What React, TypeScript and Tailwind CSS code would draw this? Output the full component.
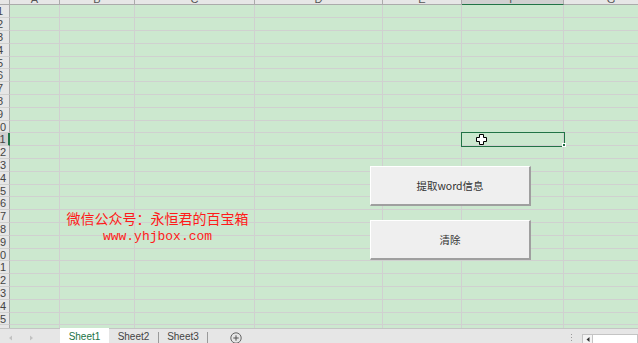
import React from 'react';

const cols = [
  { l: 'A', w: 'w-[50px]' },
  { l: 'B', w: 'w-[75px]' },
  { l: 'C', w: 'w-[120px]' },
  { l: 'D', w: 'w-[128px]' },
  { l: 'E', w: 'w-[79px]' },
  { l: 'F', w: 'w-[102px]' },
];

const rows = Array.from({ length: 25 }, (_, i) => i + 1);

function SheetButton({ top, label }: { top: string; label: string }) {
  return (
    <div className={`absolute left-[370px] ${top} w-[161px] h-[40px] bg-[#efefef] border-t border-l border-white border-r-2 border-b-2 border-r-[#9f9f9f] border-b-[#9f9f9f] flex items-center justify-center`}>
      <span className="text-[10.5px] text-[#333] font-['Noto_Sans_CJK_SC',sans-serif]">{label}</span>
    </div>
  );
}

export default function App() {
  return (
    <div className="relative w-[638px] h-[343px] overflow-hidden bg-[#cce8cf] flex flex-col font-['Liberation_Sans',sans-serif]">
      {/* column headers */}
      <div className="flex h-[5px] flex-shrink-0">
        <div className="w-[10px] bg-[#e6e6e6] border-r border-b border-[#ababab]" />
        {cols.map(c => (
          <div key={c.l} className={`${c.w} overflow-hidden flex justify-center border-r ${c.l === 'F' ? 'bg-[#d0d0d0] border-r-[#ababab] border-b border-b-[#217346]' : 'bg-[#e6e6e6] border-b border-[#ababab]'}`}>
            <span className="text-[11px] leading-[11px] mt-[-6px] text-[#555]">{c.l}</span>
          </div>
        ))}
        <div className="flex-1 overflow-hidden bg-[#e6e6e6] border-b border-[#ababab]">
          <div className="w-[94px] text-center text-[11px] leading-[11px] mt-[-6px] text-[#555]">G</div>
        </div>
      </div>

      {/* grid rows */}
      {rows.map(r => (
        <div key={r} className={`flex flex-shrink-0 ${r % 5 === 0 ? 'h-[12px]' : 'h-[13px]'}`}>
          <div className={`w-[10px] overflow-hidden border-b border-[#d0d0d0] ${r === 11 ? 'bg-[#d0d0d0] border-r-2 border-r-[#217346]' : 'bg-[#e6e6e6] border-r border-r-[#ababab]'}`}>
            <div className="w-[26px] ml-[-13px] text-center text-[11px] leading-[12px] text-[#444]">{r}</div>
          </div>
          {cols.map(c => (
            <div key={c.l} className={`${c.w} border-r border-b border-[#d0d0d0]`} />
          ))}
          <div className="flex-1 border-b border-[#d0d0d0]" />
        </div>
      ))}

      {/* partial row 26 */}
      <div className="flex h-[3px] flex-shrink-0">
        <div className="w-[10px] bg-[#e6e6e6] border-r border-[#ababab]" />
        {cols.map(c => (
          <div key={c.l} className={`${c.w} border-r border-[#d0d0d0]`} />
        ))}
        <div className="flex-1" />
      </div>

      {/* sheet tabs */}
      <div className="flex h-[15px] flex-shrink-0 bg-[#e6e6e6] border-t border-[#c4c4c4] text-[10px] text-[#444]">
        <div className="w-[60px] flex items-center gap-[16px] pl-[8px] pt-[4px]">
          <svg width="5" height="6" viewBox="0 0 5 6"><path d="M4 0.5 L1 3 L4 5.5 Z" fill="#c2c2c2" /></svg>
          <svg width="5" height="6" viewBox="0 0 5 6"><path d="M1 0.5 L4 3 L1 5.5 Z" fill="#c2c2c2" /></svg>
        </div>
        <div className="w-[49px] mt-[-1px] bg-white flex items-center justify-center pt-[2px] text-[#217346]">Sheet1</div>
        <div className="w-[49px] flex items-center justify-center pt-[1px]">Sheet2</div>
        <div className="w-px h-[11px] self-end bg-[#9a9a9a]" />
        <div className="w-[48px] flex items-center justify-center pt-[1px]">Sheet3</div>
        <div className="w-px h-[11px] self-end bg-[#9a9a9a]" />
        <div className="ml-[22px] pt-[3px]">
          <svg width="12" height="12" viewBox="0 0 12 12">
            <circle cx="6" cy="6" r="5.2" fill="none" stroke="#666" strokeWidth="1" />
            <path d="M6 3.3 V8.7 M3.3 6 H8.7" stroke="#555" strokeWidth="1" />
          </svg>
        </div>
        <div className="flex-1" />
        <div className="flex flex-col justify-center gap-[2px] pt-[3px] mr-[10px]">
          <div className="w-px h-px bg-[#9a9a9a]" />
          <div className="w-px h-px bg-[#9a9a9a]" />
          <div className="w-px h-px bg-[#9a9a9a]" />
        </div>
        <div className="self-end mb-[-1px] w-[11px] h-[10px] bg-[#f4f4f4] border border-[#c4c4c4] flex items-center justify-center">
          <svg width="4" height="5" viewBox="0 0 4 5"><path d="M3.5 0 L0.5 2.5 L3.5 5 Z" fill="#333" /></svg>
        </div>
        <div className="self-end mb-[-1px] w-[45px] h-[10px] bg-white border border-l-0 border-[#c4c4c4]" />
      </div>

      {/* merged cell text */}
      <div className="absolute left-[60px] top-[210px] w-[195px] flex flex-col items-center text-[#ff1a1a]">
        <div className="text-[14px] leading-[17px] font-['Noto_Sans_CJK_SC',serif]">微信公众号：永恒君的百宝箱</div>
        <div className="text-[13px] leading-[16px] mt-[2px] font-['Liberation_Mono',monospace]">www.yhjbox.com</div>
      </div>

      {/* buttons */}
      <SheetButton top="top-[166px]" label="提取word信息" />
      <SheetButton top="top-[220px]" label="清除" />

      {/* active cell F11 */}
      <div className="absolute left-[461px] top-[132px] w-[104px] h-[15px] border border-[#217346]" />
      <div className="absolute left-[562px] top-[143px] w-[4px] h-[4px] bg-[#217346] border border-white" />

      {/* cursor */}
      <svg className="absolute left-[476px] top-[134px]" width="12" height="12" viewBox="0 0 12 12">
        <path d="M3.5 0.5 H7.5 V3.5 H10.5 V7.5 H7.5 V10.5 H3.5 V7.5 H0.5 V3.5 H3.5 Z" fill="#fff" stroke="#000" strokeWidth="1" />
      </svg>
    </div>
  );
}
